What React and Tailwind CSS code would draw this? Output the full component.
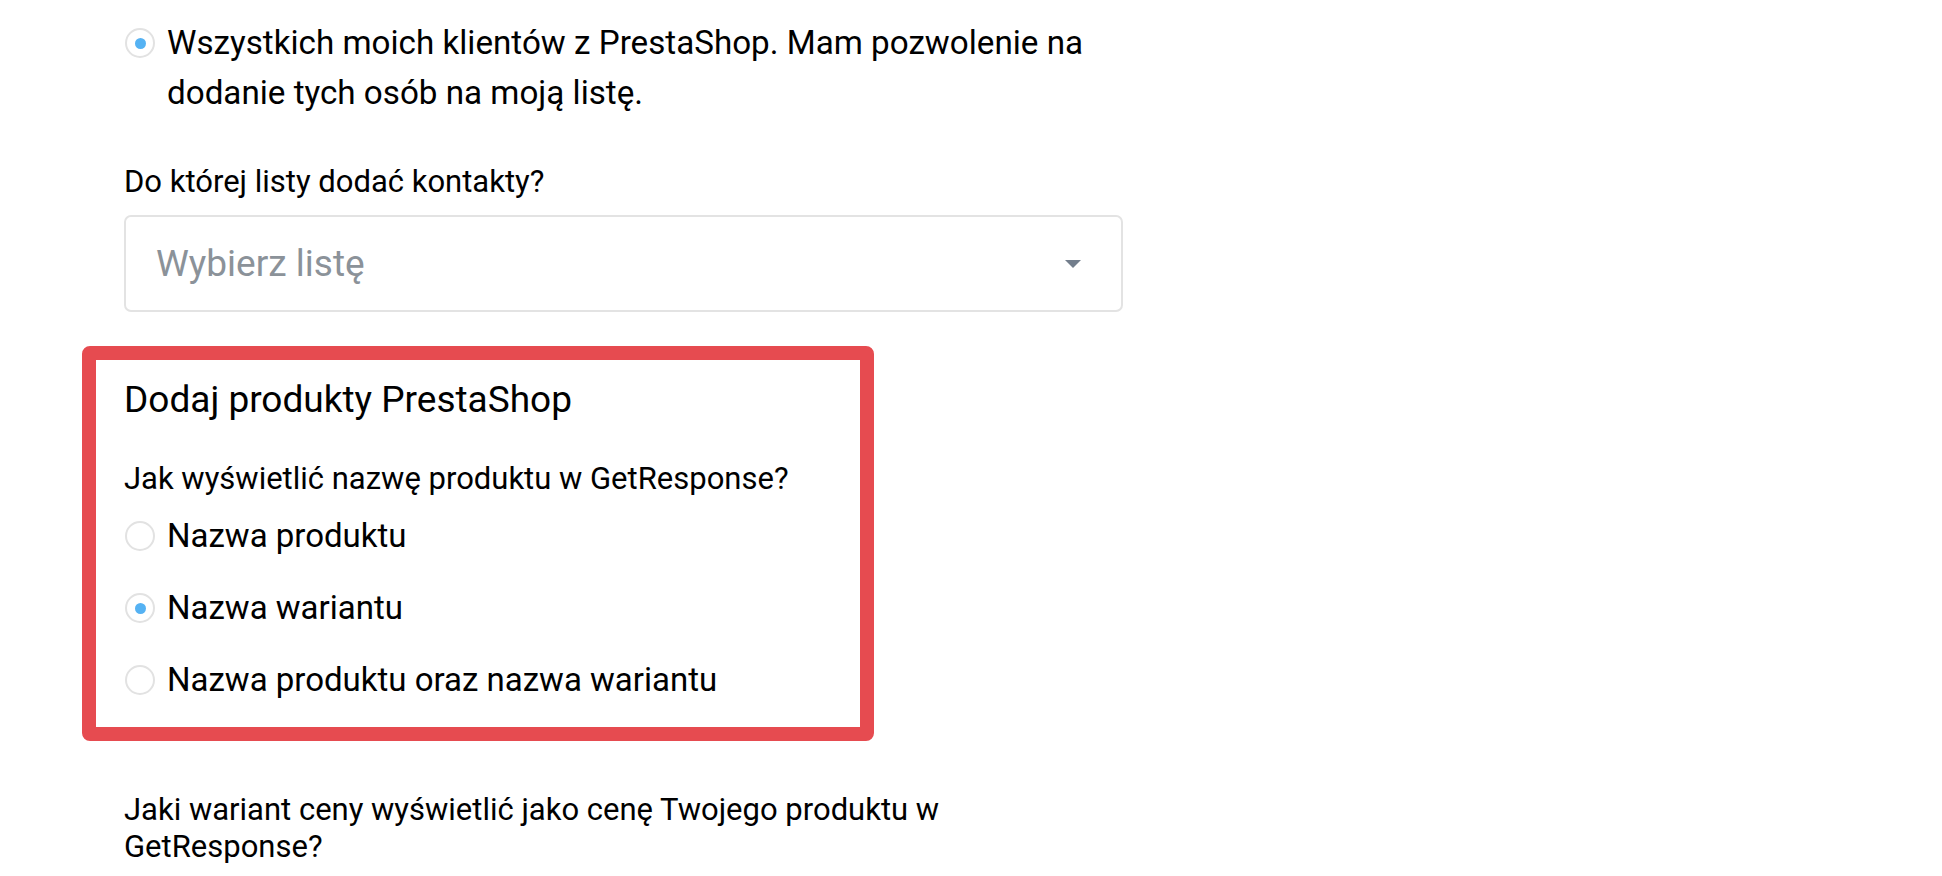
import React from 'react';

const Radio = ({ checked }) => (
    <span className="mt-[10px] ml-px w-[30px] h-[30px] shrink-0 rounded-full border-2 border-[#e2e2e2] bg-white flex items-center justify-center">
        {checked && <span className="w-[11px] h-[11px] rounded-full bg-[#55b2f3]" />}
    </span>
);

const Option = ({ checked, children }) => (
    <label className="h-[72px] flex items-center gap-[12px]">
        <span className="ml-px w-[30px] h-[30px] shrink-0 rounded-full border-2 border-[#e2e2e2] bg-white flex items-center justify-center">
            {checked && <span className="w-[11px] h-[11px] rounded-full bg-[#55b2f3]" />}
        </span>
        <span className="text-[33px] leading-[40px]">{children}</span>
    </label>
);

export default function App() {
    return (
        <div className="w-full h-[876px] overflow-hidden bg-white text-black pl-[82px] font-['Roboto','Liberation_Sans',sans-serif]">
            {/* Contacts source */}
            <div className="pl-[42px] w-[1041px] pt-[18px]">
                <div className="flex items-start gap-[12px]">
                    <Radio checked />
                    <p className="text-[33.2px] leading-[50px]">
                        Wszystkich moich klientów z PrestaShop. Mam pozwolenie na dodanie tych osób na moją listę.
                    </p>
                </div>

                <p className="mt-[44px] text-[31px] leading-[40px]">Do której listy dodać kontakty?</p>

                <div className="mt-[13px] h-[97px] rounded-[7px] border-2 border-[#e3e3e3] pl-[30px] pr-[40px] flex items-center justify-between">
                    <span className="text-[37px] text-[#8b9299]">Wybierz listę</span>
                    <svg width="16" height="8" viewBox="0 0 16 8">
                        <path d="M0 0 L16 0 L8 8 Z" fill="#737e8c" />
                    </svg>
                </div>
            </div>

            {/* Products section (highlighted) */}
            <div className="mt-[34px] w-[792px] border-[14px] border-[#e64b50] rounded-[8px] px-[28px] pt-[18px] pb-[11px]">
                <h3 className="text-[37px] leading-[44px]">Dodaj produkty PrestaShop</h3>
                <p className="mt-[37px] text-[31px] leading-[40px]">Jak wyświetlić nazwę produktu w GetResponse?</p>
                <div className="mt-px flex flex-col">
                    <Option>Nazwa produktu</Option>
                    <Option checked>Nazwa wariantu</Option>
                    <Option>Nazwa produktu oraz nazwa wariantu</Option>
                </div>
            </div>

            <div className="pl-[42px] w-[942px] mt-[50px]">
                <p className="text-[31px] leading-[37px]">
                    Jaki wariant ceny wyświetlić jako cenę Twojego produktu w GetResponse?
                </p>
            </div>
        </div>
    );
}
